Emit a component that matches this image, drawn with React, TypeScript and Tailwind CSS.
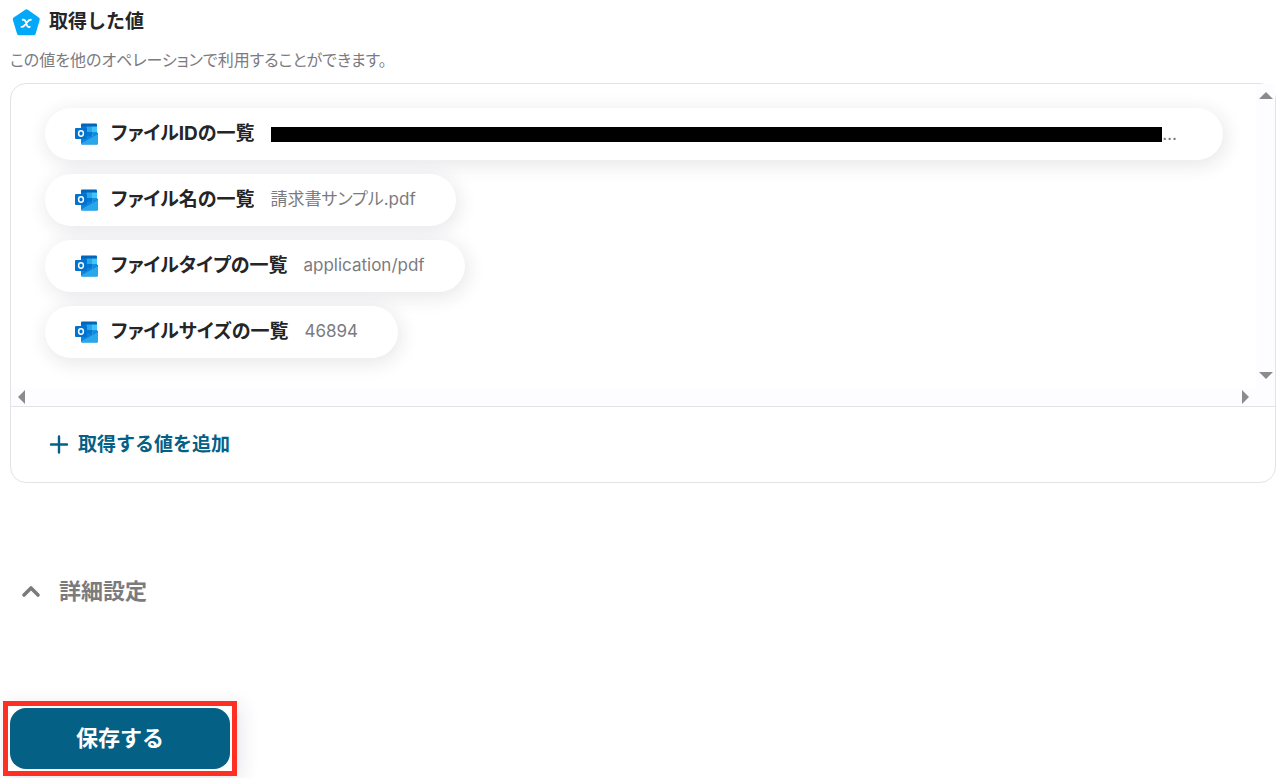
import type { ReactNode } from "react";

type OutputValue = { label: string; value?: string };

const VALUES: OutputValue[] = [
  { label: "ファイルIDの一覧" },
  { label: "ファイル名の一覧", value: "請求書サンプル.pdf" },
  { label: "ファイルタイプの一覧", value: "application/pdf" },
  { label: "ファイルサイズの一覧", value: "46894" },
];

export default function App() {
  return (
    <main className="bg-white pb-[2px] font-[Inter,'Noto_Sans_CJK_JP',sans-serif] text-[#252528]">
      <div className="pl-[10px] pr-[9px]">
        <header className="flex items-center gap-2 pt-[6px]">
          <VariableIcon />
          <h1 className="text-[19px] leading-8 font-bold">取得した値</h1>
        </header>
        <p className="mt-[10px] text-[16px] leading-6 text-[#7b7b7f] [font-feature-settings:'palt']">この値を他のオペレーションで利用することができます。</p>

        <section className="mt-[11px] rounded-2xl border border-[#e3e2e6]">
          {/* Value list with its scrollbars */}
          <div className="flex rounded-tl-2xl border-b border-[#e3e2e6]">
            <div className="min-w-0 flex-1">
              <ul className="flex h-[304px] flex-col items-start gap-[14px] pt-6 pr-[33px] pl-[34px]">
                {VALUES.map((v) => <ValuePill key={v.label} {...v} />)}
              </ul>
              <div className="flex h-[18px] items-center justify-between bg-[#fdfcfe] px-[7px]">
                <ScrollButton label="左へスクロール"><Arrow d="M7 0v14L0 7z" w={7} h={14} /></ScrollButton>
                <ScrollButton label="右へスクロール"><Arrow d="M0 0v14l7-7z" w={7} h={14} /></ScrollButton>
              </div>
            </div>
            <div className="flex w-[19px] flex-col items-center justify-between bg-[#fdfcfe] pt-2 pb-[27px]">
              <ScrollButton label="上へスクロール"><Arrow d="M0 7h14L7 0z" w={14} h={7} /></ScrollButton>
              <ScrollButton label="下へスクロール"><Arrow d="M0 0h14L7 7z" w={14} h={7} /></ScrollButton>
            </div>
          </div>
          <button className="mx-[38px] my-[22px] flex items-center gap-[9px] text-[19px] leading-[31px] font-bold text-[#046085]">
            <svg width="20" height="20" viewBox="0 0 20 20" fill="none" stroke="currentColor" strokeWidth="2.4" strokeLinecap="round"><path d="M10 1.500v16M2 9.500h16" /></svg>
            取得する値を追加
          </button>
        </section>

        <button className="mt-[92px] ml-[10px] flex items-center gap-[17px] text-[22px] leading-8 font-bold text-[#7b7b7f]">
          <svg width="22" height="22" viewBox="0 0 22 22" fill="none" stroke="currentColor" strokeWidth="3.6" strokeLinecap="round" strokeLinejoin="round"><path d="m4 15 7-7 7 7" /></svg>
          詳細設定
        </button>
      </div>

      <div className="mt-[94px] ml-[3px] w-[234px] border-5 border-[#fe3024] p-[2px] shadow-[4px_4px_18px_rgba(60,40,90,0.12)]">
        <button className="h-[61px] w-full rounded-2xl bg-[#046085] text-[22px] font-bold text-white">保存する</button>
      </div>
    </main>
  );
}

function ValuePill({ label, value }: OutputValue) {
  return (
    <li className={`flex h-[52px] items-center gap-4 rounded-full bg-white pl-[30px] shadow-[2px_4px_20px_rgba(50,30,60,0.12)] ${value ? "pr-10" : "w-full pr-[46px]"}`}>
      <div className="flex shrink-0 items-center gap-3">
        <OutlookIcon />
        <span className="text-[19px] leading-7 font-bold [font-feature-settings:'palt']">{label}</span>
      </div>
      {value ? (
        <span className="pb-[2px] text-[17px] leading-6 text-[#7b7b7f] [font-feature-settings:'palt']">{value}</span>
      ) : (
        <span className="flex flex-1 items-center text-[17px] leading-6 text-[#7b7b7f]">
          <span className="h-[15px] flex-1 bg-black" />…
        </span>
      )}
    </li>
  );
}

function ScrollButton({ label, children }: { label: string; children: ReactNode }) {
  return <button aria-label={label} className="text-[#8b8a8d]">{children}</button>;
}

function Arrow({ d, w, h }: { d: string; w: number; h: number }) {
  return <svg width={w} height={h} viewBox={`0 0 ${w} ${h}`} fill="currentColor" className="block"><path d={d} /></svg>;
}

function VariableIcon() {
  return (
    <svg width="31" height="30" viewBox="0 0 31 30" className="shrink-0">
      <path d="M16.5 4.5 27.5 12.4 23.5 26H9.2L5 12.4z" fill="#03a9f8" stroke="#03a9f8" strokeWidth="4.5" strokeLinejoin="round" />
      <path d="M12.800 12.800c1.500-.3 2.200.2 2.800 1.700l1.300 3.800c.5 1.500 1.200 2 2.800 1.600M20.800 12.800c-1.500-.2-2.300.5-3.700 2.300l-2 2.700c-1.200 1.700-2 2.300-3.600 2.100" fill="none" stroke="#fff" strokeWidth="1.900" strokeLinecap="round" />
    </svg>
  );
}

function OutlookIcon() {
  return (
    <svg width="24" height="24" viewBox="0 0 24 24" className="shrink-0">
      <path d="M6 2.500q0-1 1-1h14q1 0 1 1V13H6z" fill="#0364b8" />
      <path d="M6 4.500h5.500V10H6z" fill="#0078d4" />
      <path d="M11.500 4.500H17V10h-5.500z" fill="#28a8ea" />
      <path d="M17 4.500h5V10h-5z" fill="#41c5f7" />
      <path d="M11.500 10H17v5h-5.500z" fill="#0078d4" />
      <path d="M17 10h5v3h-5z" fill="#1490df" />
      <path d="M6 10h5.500v5H6z" fill="#0a5cae" />
      <path d="M6 14h10l7-3.500v10.800q0 1.200-1.200 1.200H7q-1 0-1-1z" fill="#1182dc" />
      <path d="M6 21.500 23 12v9.300q0 1.200-1.200 1.200H7q-1 0-1-1z" fill="#28a8ea" />
      <rect y="6" width="12" height="11" rx="1" fill="#0072cf" />
      <ellipse cx="6" cy="11.500" rx="2.400" ry="2.700" fill="none" stroke="#fff" strokeWidth="1.500" />
    </svg>
  );
}
